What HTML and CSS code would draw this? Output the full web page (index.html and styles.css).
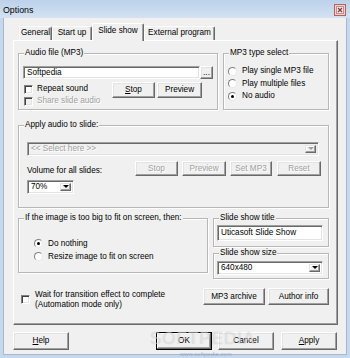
FILE: index.html
```html
<!DOCTYPE html>
<html lang="en">

<head>
    <meta charset="UTF-8">
    <meta name="viewport" content="width=device-width, initial-scale=1.0">
    <title>Options</title>
    <link rel="stylesheet" href="styles.css">
</head>

<body>
    <div class="window">
        <div class="titlebar">
            <span class="title">Options</span>
            <span class="close">
                <svg width="12" height="12" viewBox="0 0 12 12">
                    <rect x="0.5" y="0.5" width="11" height="11" fill="#e9d3d3" stroke="#b9605f" />
                    <rect x="2.5" y="2.5" width="7" height="7" fill="#f6ecec" stroke="#c98a8a" />
                    <path d="M4 4 L8 8 M8 4 L4 8" stroke="#7a3b3b" stroke-width="1.2" />
                </svg>
            </span>
        </div>

        <div class="client">
            <!-- tab strip -->
            <div class="tabs">
                <div class="tab tab-general">General</div>
                <div class="tab tab-startup">Start up</div>
                <div class="tab tab-slides active">Slide show</div>
                <div class="tab tab-external">External program</div>
            </div>

            <div class="panel">
                <div class="row row-audio">
                    <div class="group group-audio">
                        <span class="caption">Audio file (MP3)</span>
                        <div class="file-line">
                            <div class="edit file-edit">Softpedia</div>
                            <button class="btn btn-browse">...</button>
                        </div>
                        <div class="audio-line">
                            <div class="checks">
                                <div class="check"><span class="box"></span>Repeat sound</div>
                                <div class="check disabled"><span class="box"></span>Share slide audio</div>
                            </div>
                            <button class="btn btn-stop"><u>S</u>top</button>
                            <button class="btn btn-preview">Preview</button>
                        </div>
                    </div>

                    <div class="group group-type">
                        <span class="caption">MP3 type select</span>
                        <div class="option"><span class="radio"></span>Play single MP3 file</div>
                        <div class="option"><span class="radio"></span>Play multiple files</div>
                        <div class="option"><span class="radio on"></span>No audio</div>
                    </div>
                </div>

                <div class="group group-apply">
                    <span class="caption">Apply audio to slide:</span>
                    <div class="combo combo-slide disabled">
                        <span class="combo-text">&lt;&lt; Select here &gt;&gt;</span>
                        <span class="arrow"></span>
                    </div>
                    <div class="apply-line">
                        <div class="volume">
                            <div class="volume-label">Volume for all slides:</div>
                            <div class="combo combo-volume">
                                <span class="combo-text">70%</span>
                                <span class="arrow"></span>
                            </div>
                        </div>
                        <button class="btn btn-small disabled w43">Stop</button>
                        <button class="btn btn-small disabled w44">Preview</button>
                        <button class="btn btn-small disabled w42">Set MP3</button>
                        <button class="btn btn-small disabled w44 gap5">Reset</button>
                    </div>
                </div>

                <div class="row row-image">
                    <div class="group group-image">
                        <span class="caption">If the image is too big to fit on screen, then:</span>
                        <div class="option option-tall"><span class="radio on"></span>Do nothing</div>
                        <div class="option option-tall"><span class="radio"></span>Resize image to fit on screen</div>
                    </div>
                    <div class="side">
                        <div class="group group-title">
                            <span class="caption">Slide show title</span>
                            <div class="edit title-edit">Uticasoft Slide Show</div>
                        </div>
                        <div class="group group-size">
                            <span class="caption">Slide show size</span>
                            <div class="combo combo-size">
                                <span class="combo-text">640x480</span>
                                <span class="arrow"></span>
                            </div>
                        </div>
                    </div>
                </div>

                <div class="row row-wait">
                    <div class="wait">
                        <span class="box"></span>
                        <span class="wait-text">Wait for transition effect to complete<br>(Automation mode only)</span>
                    </div>
                    <button class="btn btn-archive">MP3 archive</button>
                    <button class="btn btn-author">Author info</button>
                </div>
            </div>

            <div class="actions">
                <button class="btn btn-action"><u>H</u>elp</button>
                <button class="btn btn-action btn-default btn-ok">OK</button>
                <button class="btn btn-action btn-cancel">Cancel</button>
                <button class="btn btn-action btn-apply"><u>A</u>pply</button>
            </div>
        </div>

        <span class="watermark">SOFTPEDIA</span>
        <span class="watermark-url">www.softpedia.com</span>
    </div>
</body>

</html>
```

FILE: styles.css
```css
* {
    box-sizing: border-box;
}

body {
    margin: 0;
    background: #fff;
    font-family: "Liberation Sans", Arial, sans-serif;
    font-size: 8.2px;
    line-height: 10px;
    color: #000;
}

.window {
    position: relative;
    width: 350px;
    height: 358px;
    background: #c6d8ed;
    overflow: hidden;
}

.titlebar {
    height: 18px;
    display: flex;
    align-items: center;
    justify-content: space-between;
    padding: 0 4px 0 3px;
    background: linear-gradient(#bcd1ea, #d4e2f2);
}

.title {
    font-size: 8.8px;
    padding-top: 1px;
}

.close {
    display: flex;
    margin-top: 1px;
}

.client {
    margin: 0 3px;
    width: 344px;
    height: 337px;
    padding-top: 5px;
    background: #f0f0f0;
    border: 1px solid #a5b8cf;
    border-top: none;
}

/* tabs */
.tabs {
    display: flex;
    align-items: flex-end;
    height: 17px;
    margin-left: 15px;
}

.tab {
    height: 14px;
    line-height: 12px;
    text-align: center;
    border-top: 1px solid #fff;
    border-left: 1px solid #fff;
    border-right: 1px solid #696969;
    border-radius: 2px 2px 0 0;
    box-shadow: inset -1px 0 #a0a0a0;
}

.tab-general {
    width: 33px;
}

.tab-startup {
    width: 40px;
}

.tab-slides {
    width: 52px;
}

.tab-external {
    width: 71px;
}

.tab.active {
    position: relative;
    z-index: 2;
    height: 18px;
    margin-bottom: -1px;
    line-height: 13px;
    background: #f0f0f0;
}

.panel {
    margin-left: 9px;
    width: 325px;
    height: 285px;
    padding-left: 4px;
    border: 1px solid;
    border-color: #fff #696969 #696969 #fff;
    box-shadow: inset -1px -1px #a0a0a0;
}

/* group boxes */
.row {
    display: flex;
}

.group {
    position: relative;
    border: 1px solid #b7b7b7;
    box-shadow: inset 1px 1px #fff, 1px 1px #fff;
}

.caption {
    position: absolute;
    top: -6px;
    left: 5px;
    padding: 0 1px;
    background: #f0f0f0;
    white-space: nowrap;
}

.row-audio {
    margin-top: 12px;
    height: 57px;
}

.group-audio {
    width: 200px;
    padding: 12px 0 0 4px;
}

.file-line {
    display: flex;
}

.audio-line {
    display: flex;
    align-items: flex-start;
    margin-top: 3px;
}

.checks {
    width: 89px;
    padding: 1px 0 0 1px;
}

.check {
    display: flex;
    align-items: center;
    height: 12px;
}

.box {
    flex: none;
    width: 9px;
    height: 9px;
    margin-right: 4px;
    background: #fff;
    border: 1px solid;
    border-color: #808080 #fff #fff #808080;
    box-shadow: inset 1px 1px #404040, inset -1px -1px #e3e3e3;
}

.disabled {
    color: #a0a0a0;
    text-shadow: 1px 1px #fff;
}

.check.disabled .box {
    background: #f0f0f0;
}

.group-type {
    width: 106px;
    margin-left: 5px;
    padding: 11px 0 0 4px;
}

.option {
    display: flex;
    align-items: center;
    height: 12.5px;
    white-space: nowrap;
}

.radio {
    flex: none;
    position: relative;
    width: 9px;
    height: 9px;
    margin-right: 5px;
    border-radius: 50%;
    background: #fff;
    border: 1px solid;
    border-color: #808080 #e8e8e8 #e8e8e8 #808080;
}

.radio.on::after {
    content: "";
    position: absolute;
    left: 2px;
    top: 2px;
    width: 3px;
    height: 3px;
    border-radius: 50%;
    background: #000;
}

/* edits, combos, buttons */
.edit,
.combo {
    position: relative;
    background: #fff;
    padding-left: 3px;
    white-space: nowrap;
    border: 1px solid;
    border-color: #a0a0a0 #fff #fff #a0a0a0;
    box-shadow: inset 1px 1px #696969, inset -1px -1px #e3e3e3;
}

.file-edit {
    width: 177px;
    height: 13px;
    line-height: 11px;
}

.btn {
    margin: 0;
    padding: 0;
    font: inherit;
    color: #000;
    background: #f0f0f0;
    border: 1px solid;
    border-color: #fff #696969 #696969 #fff;
    box-shadow: inset -1px -1px #a0a0a0, inset 1px 1px #e3e3e3;
    text-align: center;
    white-space: nowrap;
}

.btn.disabled {
    color: #a0a0a0;
}

.btn-browse {
    width: 13px;
    height: 13px;
    line-height: 8px;
}

.btn-stop {
    width: 43px;
    height: 16px;
}

.btn-preview {
    width: 45px;
    height: 16px;
    margin-left: 2px;
}

.group-apply {
    margin-top: 15px;
    width: 311px;
    height: 83px;
    padding: 16px 0 0 8px;
}

.combo-slide {
    width: 292px;
    height: 14px;
    line-height: 12px;
}

.combo.disabled {
    background: #f0f0f0;
}

.arrow {
    position: absolute;
    right: 2px;
    top: 2px;
    bottom: 2px;
    width: 11px;
    background: #f0f0f0;
    border: 1px solid;
    border-color: #e3e3e3 #696969 #696969 #e3e3e3;
    box-shadow: inset -1px -1px #a0a0a0, inset 1px 1px #fff;
}

.arrow::after {
    content: "";
    position: absolute;
    left: 2px;
    top: 50%;
    margin-top: -2px;
    border-left: 3px solid transparent;
    border-right: 3px solid transparent;
    border-top: 3px solid #000;
}

.combo.disabled .arrow::after {
    border-top-color: #a0a0a0;
}

.apply-line {
    display: flex;
    align-items: flex-start;
    margin-top: 5px;
}

.volume {
    width: 108px;
    padding-top: 5px;
}

.combo-volume {
    width: 47px;
    height: 14px;
    line-height: 12px;
    margin-top: 4px;
}

.btn-small {
    height: 15px;
    margin-right: 4px;
}

.w42 {
    width: 42px;
}

.w43 {
    width: 43px;
}

.w44 {
    width: 44px;
}

.gap5 {
    margin-left: 1px;
}

.row-image {
    margin-top: 10px;
    height: 61px;
}

.group-image {
    width: 190px;
    height: 55px;
    padding: 18px 0 0 15px;
}

.option-tall {
    height: 13px;
}

.side {
    width: 116px;
    margin-left: 5px;
}

.group-title {
    height: 29px;
    padding: 6px 0 0 3px;
}

.title-edit {
    width: 106px;
    height: 16px;
    line-height: 14px;
}

.group-size {
    margin-top: 6px;
    height: 26px;
    padding: 7px 0 0 3px;
}

.combo-size {
    width: 106px;
    height: 14px;
    line-height: 12px;
}

.row-wait {
    margin-top: 9px;
    width: 311px;
    align-items: flex-start;
}

.wait {
    display: flex;
    align-items: flex-start;
    flex: 1;
    padding: 2px 0 0 3px;
}

.wait .box {
    margin-top: 5px;
    margin-right: 5px;
}

.btn-archive {
    width: 62px;
    height: 17px;
}

.btn-author {
    width: 61px;
    height: 17px;
    margin-left: 3px;
}

/* dialog buttons */
.actions {
    display: flex;
    margin: 7px 0 0 9px;
}

.btn-action {
    width: 56px;
    height: 18px;
}

.btn-default {
    border: 1px solid #000;
    box-shadow: inset -1px -1px #696969, inset 1px 1px #fff, inset -2px -2px #a0a0a0;
}

.btn-ok {
    margin-left: 87px;
}

.btn-cancel {
    margin-left: 6px;
}

.btn-apply {
    margin-left: 7px;
}

/* screenshot watermark */
.watermark {
    position: absolute;
    left: 150px;
    top: 329px;
    font-size: 17px;
    line-height: 20px;
    letter-spacing: 1px;
    color: rgba(255, 255, 255, 0.45);
    text-shadow: 0 0 1px rgba(110, 110, 110, 0.35);
    pointer-events: none;
}

.watermark-url {
    position: absolute;
    left: 180px;
    top: 350px;
    font-size: 6px;
    line-height: 8px;
    color: rgba(120, 150, 190, 0.6);
}
```
